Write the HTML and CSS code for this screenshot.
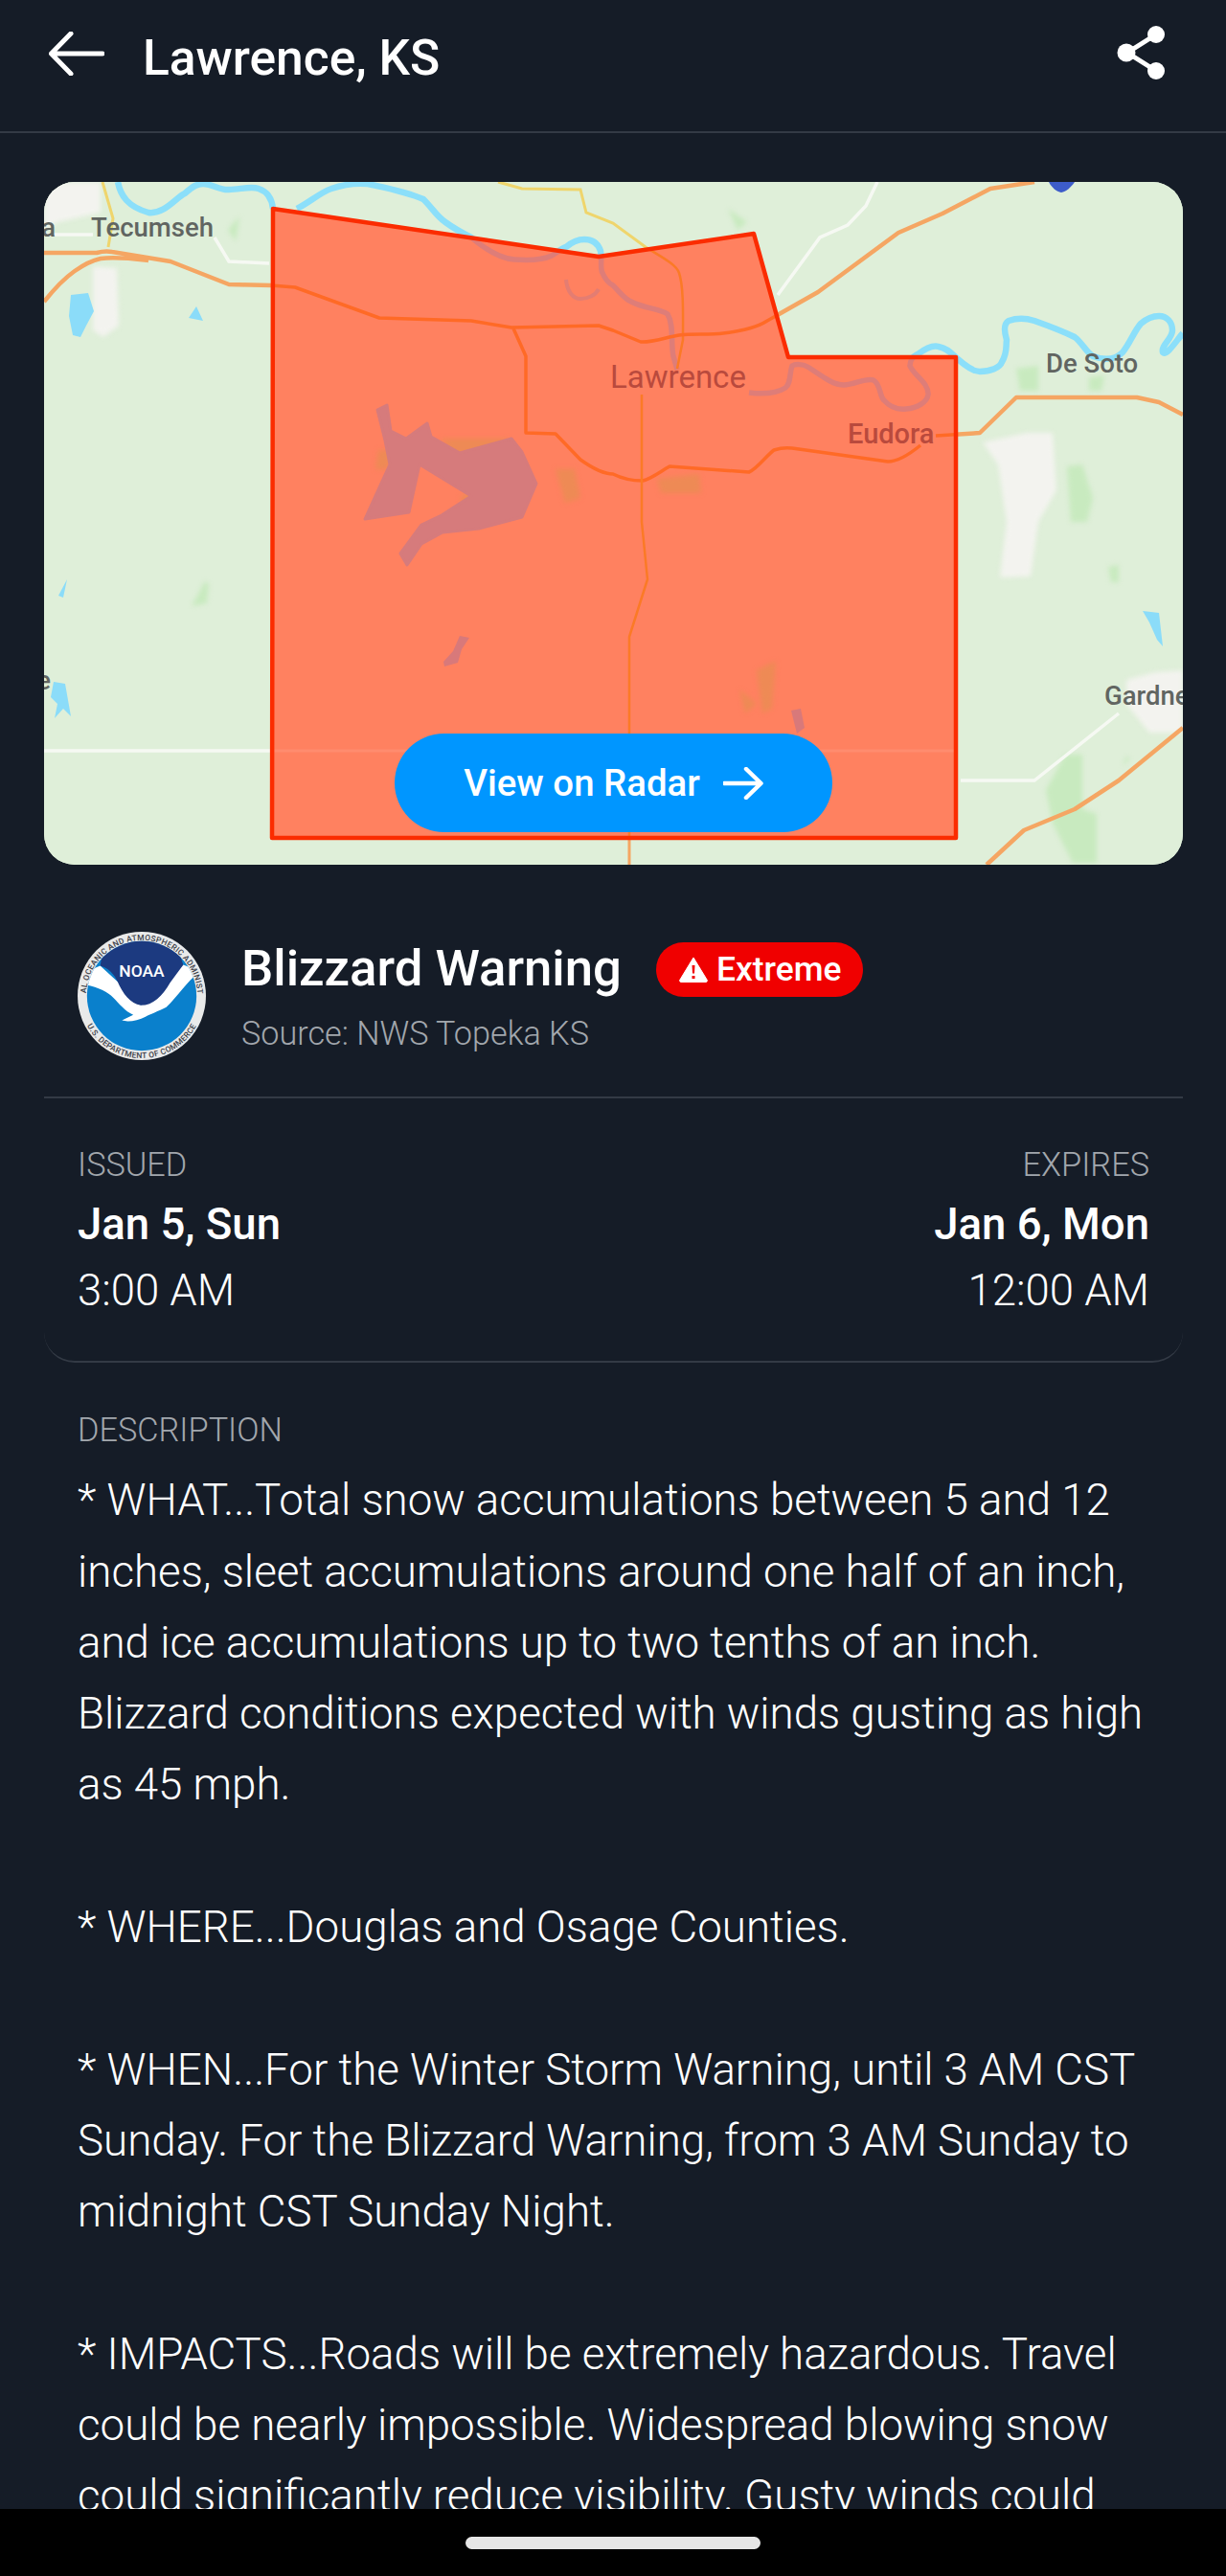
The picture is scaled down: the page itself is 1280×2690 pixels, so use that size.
FILE: index.html
```html
<!DOCTYPE html>
<html lang="en">
<head>
<meta charset="utf-8">
<title>Lawrence, KS</title>
<link rel="stylesheet" href="styles.css">
</head>
<body>
<div class="app">
  <header class="topbar">
    <div class="topbar-left">
      <svg class="back-icon" viewBox="0 0 58 46" aria-hidden="true"><path d="M56 23H3M23 2 2.5 23 23 44"/></svg>
      <h1 class="topbar-title">Lawrence, KS</h1>
    </div>
    <svg class="share-icon" viewBox="0 0 52 56" aria-hidden="true">
      <path class="share-lines" d="M41 9 11 28l30 19"/>
      <circle cx="41" cy="9" r="9"/><circle cx="10" cy="28" r="9.5"/><circle cx="41" cy="47" r="9"/>
    </svg>
  </header>

  <main class="content">
    <section class="map">
      <svg class="map-svg" viewBox="46 190 1189 713" aria-hidden="true">
        <defs>
          <clipPath id="warn-area"><polygon points="285,218 625,268 787,244 823,373 998,373 998,875 284,875"/></clipPath>
          <path id="rivers" d="M123 190C126 205 134 216 155 222C172 224 184 206 193 202C202 194 206 192 212 192C222 192 230 199 239 198C250 198 262 194 270 197C279 200 284 208 285 218M310 218C322 212 336 200 346 197C360 192 372 191 384 192C402 196 424 200 442 208C452 218 456 226 465 232C476 240 484 244 492 248C504 258 520 270 537 271C552 272 566 272 576 267C584 262 588 258 591 258C598 252 604 250 610 250C620 250 625 256 627 262C629 272 626 280 629 285C632 292 636 296 640 298C648 306 652 312 659 315C672 322 688 322 697 328C704 340 700 358 703 372L707 386M782 410C798 412 812 410 820 405C826 400 824 390 827 382C830 380 838 380 843 383C855 390 868 402 881 402C892 402 904 394 912 397C920 402 918 414 923 418C930 426 938 428 946 427C958 426 968 420 969 412C970 400 954 392 950 382C950 376 954 372 958 370C966 364 974 360 980 362C990 364 994 370 1000 375C1008 382 1016 388 1023 388C1034 388 1044 384 1046 378C1052 368 1050 362 1051 355C1048 345 1048 338 1053 335C1062 332 1070 332 1080 335C1094 340 1110 346 1122 352C1130 358 1134 368 1141 372C1152 376 1164 376 1172 368C1180 358 1184 346 1191 338C1198 332 1204 330 1210 330C1218 330 1224 336 1224 345C1224 354 1212 360 1214 368C1218 372 1228 356 1235 348"/>
          <path id="oxbow" d="M591 292C592 304 598 312 606 312C614 312 622 308 625 302"/>
          <path id="roads-main" d="M46 264H101C108 262 112 262 117 263L178 273L239 297L283 298L308 300L396 332L492 335L534 342L625 340L640 345L669 357C680 358 696 352 709 350C724 348 740 350 755 348C772 346 790 342 801 335L854 305L938 243L984 223L1034 197L1080 190M46 315C58 300 68 290 78 283C88 276 96 272 105 270C122 268 138 270 155 272"/>
          <path id="roads-east" d="M536 343L549 372V452L580 453L606 480C620 490 630 495 640 495C650 500 660 502 671 502C680 500 690 492 699 487L782 493C790 490 800 476 808 470C814 468 820 467 827 468L927 482C938 482 950 474 961 465M977 455L1023 452L1061 415H1187L1210 420L1235 433M1235 760L1168 815L1122 845L1069 867L1030 903"/>
          <path id="roads-yellow" d="M520 190L545 197L606 198L612 222L640 233L674 258C690 268 706 276 709 285C714 300 713 330 713 355L707 385M107 190L118 228L113 258"/>
          <path id="road-south" d="M670 412V545L676 605L657 665V903"/>
          <path id="roads-white" d="M48 245H97M224 248L239 273L281 275M916 190L904 215L885 235L856 248L812 308M46 784H1000M1003 815H1080L1168 745"/>
          <path id="clinton-lake" d="M394 428L404 423L408 450L424 458L446 442L450 456L480 473L534 458L545 472L560 505L545 540L500 552L462 556L440 568L425 590L418 578L440 548L461 538L492 518L438 485L427 535L381 542L407 485L402 460Z"/>
        </defs>

        <rect class="land" x="46" y="190" width="1189" height="713"/>
        <g class="soft-wide">
          <path class="urban" d="M46 190H105V222L60 232L46 240ZM97 278L122 280L124 340L108 352L97 345ZM1026 462L1072 452L1099 452L1103 512L1084 545L1076 602L1044 603L1051 545L1042 485ZM1176 710L1206 702L1235 700V765L1200 765L1176 735Z"/>
          <path class="green" d="M1061 385L1084 382L1084 408L1065 408ZM1137 394L1153 392L1150 408L1137 408ZM1114 487L1130 485L1141 520L1135 545L1118 545ZM1092 825L1112 788L1130 788L1130 845L1145 850L1145 901H1120L1099 860ZM1157 592L1168 590L1168 608L1160 608ZM1176 790L1180 792L1172 800ZM238 240L250 226L246 252ZM760 218L770 240L780 232ZM214 607L218 610L216 630L200 633Z"/>
        </g>
        <g class="soft">
          <use class="river" href="#rivers"/>
          <path class="lake" d="M74 308L92 306L98 325L90 340L84 352L76 350L72 330ZM205 320L212 335L197 332ZM70 605L66 624L61 622ZM56 712L68 714L74 748L66 740L57 750L60 735L53 728ZM1193 638L1210 640L1214 675L1208 668L1200 650Z"/>
          <use class="road-white" href="#roads-white"/>
          <use class="road-yellow" href="#roads-yellow"/>
          <use class="road" href="#roads-main"/>
          <use class="road" href="#roads-east"/>
          <use class="road-thin" href="#road-south"/>
          <path class="pin" d="M1095 190H1122C1118 196 1113 200 1108 201C1103 200 1098 196 1095 190Z"/>
        </g>

        <g clip-path="url(#warn-area)">
          <rect class="warn-fill" x="284" y="218" width="714" height="657"/>
          <g class="soft-wide">
            <path class="warn-patch" d="M686 500L730 495L732 515L690 515ZM460 458L530 458L530 478L475 478ZM395 470L410 470L405 490L392 490ZM580 490L600 490L606 520L590 525ZM480 520L500 505L490 535ZM772 720L790 735L778 745ZM790 700L810 690L806 740L796 745Z"/>
          </g>
          <g class="soft">
            <use class="warn-river" href="#rivers"/>
            <use class="warn-oxbow" href="#oxbow"/>
            <use class="warn-lake" href="#clinton-lake"/>
            <path class="warn-pond" d="M480 664L490 666L482 678L478 692L464 696L463 691L473 680ZM826 742L836 740L840 760L832 766Z"/>
            <use class="warn-road-white" href="#roads-white"/>
            <use class="warn-road-thin" href="#roads-yellow"/>
            <use class="warn-road" href="#roads-main"/>
            <use class="warn-road" href="#roads-east"/>
            <use class="warn-road-thin" href="#road-south"/>
          </g>
        </g>
        <polygon class="warn-edge" points="285,218 625,268 787,244 823,373 998,373 998,875 284,875"/>

        <text class="label" x="58" y="247" text-anchor="end">a</text>
        <text class="label" x="95" y="247">Tecumseh</text>
        <text class="label" x="53" y="720" text-anchor="end">e</text>
        <text class="label" x="1092" y="389">De Soto</text>
        <text class="label" x="1153" y="736">Gardner</text>
        <text class="label label-warn label-city" x="637" y="405">Lawrence</text>
        <text class="label label-warn" x="885" y="463">Eudora</text>
      </svg>
      <a class="radar-btn">
        <span>View on Radar</span>
        <svg class="radar-arrow" viewBox="0 0 42 34" aria-hidden="true"><path d="M1 17H39M24 2 39.5 17 24 32"/></svg>
      </a>
    </section>

    <section class="alert-head">
      <svg class="noaa" viewBox="0 0 136 136" role="img" aria-label="NOAA logo">
        <defs>
          <clipPath id="noaa-inner"><circle cx="68" cy="68" r="58"/></clipPath>
          <path id="ring-top" d="M9 68A59 59 0 0 1 127 68"/>
          <path id="ring-bottom" d="M2 68A66 66 0 0 0 134 68"/>
        </defs>
        <circle class="noaa-ring" cx="68" cy="68" r="68"/>
        <text class="noaa-ring-text"><textPath href="#ring-top" startOffset="50%" text-anchor="middle">NATIONAL OCEANIC AND ATMOSPHERIC ADMINISTRATION</textPath></text>
        <text class="noaa-ring-text"><textPath href="#ring-bottom" startOffset="50%" text-anchor="middle">U.S. DEPARTMENT OF COMMERCE</textPath></text>
        <g clip-path="url(#noaa-inner)">
          <rect class="noaa-blue" width="136" height="136"/>
          <path class="noaa-white" d="M0 46L24 36L50 60L67 78L112 35L130 42C118 50 108 66 94 80C86 84 76 88 72 90C64 94 54 96 47 94L59 88C50 84 44 76 38 70C30 62 18 57 0 55Z"/>
          <path class="noaa-navy" d="M24 36C32 38 38 44 42 52C48 66 56 76 67 78C80 78 90 68 98 54L112 35L100 0H30Z"/>
        </g>
        <text class="noaa-mark" x="68" y="48" text-anchor="middle" textLength="48" lengthAdjust="spacingAndGlyphs">NOAA</text>
      </svg>
      <div class="alert-text">
        <div class="alert-title-row">
          <h2 class="alert-title">Blizzard Warning</h2>
          <span class="badge">
            <svg class="badge-icon" viewBox="0 0 32 28" aria-hidden="true">
              <path class="badge-tri" d="M16 2 30 25a1.5 1.5 0 0 1-1 2.500H3a1.500 1.500 0 0 1-1-2.500Z"/>
              <path class="badge-mark" d="M14.500 10h3l-.5 8.500h-2ZM14.500 21h3v3h-3Z"/>
            </svg>
            <span>Extreme</span>
          </span>
        </div>
        <p class="alert-source">Source: NWS Topeka KS</p>
      </div>
    </section>

    <section class="dates">
      <div class="date-col">
        <div class="caption">ISSUED</div>
        <div class="date-day">Jan 5, Sun</div>
        <div class="date-time">3:00 AM</div>
      </div>
      <div class="date-col date-col-end">
        <div class="caption">EXPIRES</div>
        <div class="date-day">Jan 6, Mon</div>
        <div class="date-time">12:00 AM</div>
      </div>
    </section>

    <section class="description">
      <div class="caption">DESCRIPTION</div>
      <p class="description-body">* WHAT...Total snow accumulations between 5 and 12 inches, sleet accumulations around one half of an inch, and ice accumulations up to two tenths of an inch. Blizzard conditions expected with winds gusting as high as 45 mph.

* WHERE...Douglas and Osage Counties.

* WHEN...For the Winter Storm Warning, until 3 AM CST Sunday. For the Blizzard Warning, from 3 AM Sunday to midnight CST Sunday Night.

* IMPACTS...Roads will be extremely hazardous. Travel could be nearly impossible. Widespread blowing snow could significantly reduce visibility. Gusty winds could</p>
    </section>
  </main>

  <footer class="navbar"><div class="nav-pill"></div></footer>
</div>
</body>
</html>
```

FILE: styles.css
```css
* { box-sizing: border-box; }
html, body { margin: 0; padding: 0; background: #151c27; }
body { font-family: Roboto, "Liberation Sans", sans-serif; color: #fff; }
h1, h2, p { margin: 0; font: inherit; }

.app { height: 2690px; display: flex; flex-direction: column; overflow: hidden; }

/* top bar */
.topbar {
  height: 139px; flex: none; display: flex; justify-content: space-between; align-items: flex-start;
  padding: 27px 62px 0 51px; border-bottom: 2px solid #333a45;
}
.topbar-left { display: flex; align-items: flex-start; gap: 40px; }
.back-icon { width: 58px; height: 46px; margin-top: 6px; fill: none; stroke: #fff; stroke-width: 5; stroke-linecap: round; stroke-linejoin: round; }
.topbar-title { font-size: 51.500px; font-weight: 500; line-height: 56px; margin-top: 6px; }
.share-icon { width: 52px; height: 56px; fill: #fff; }
.share-lines { fill: none; stroke: #fff; stroke-width: 5; }

/* content */
.content { flex: 1; min-height: 0; overflow: hidden; padding: 51px 45px 0 46px; }

/* map */
.map { position: relative; height: 713px; border-radius: 32px; overflow: hidden; background: #dfefd9; }
.map-svg { display: block; width: 100%; height: 100%; }
.land { fill: #dfefd9; }
.soft { filter: blur(0.7px); }
.soft-wide { filter: blur(2.500px); }
.urban { fill: #f3f3ef; }
.green { fill: #c8eabf; }
.lake { fill: #8bdcf9; }
.river { fill: none; stroke: #8bdffa; stroke-width: 6.500; stroke-linejoin: round; }
.road { fill: none; stroke: #f5a663; stroke-width: 4.500; stroke-linejoin: round; }
.road-thin { fill: none; stroke: #f5a663; stroke-width: 3; }
.road-yellow { fill: none; stroke: #efd56c; stroke-width: 3; }
.road-white { fill: none; stroke: #f6f9f3; stroke-width: 3.500; }
.pin { fill: #3d5cc9; }
.warn-fill { fill: #ff8160; }
.warn-patch { fill: #ee8a55; }
.warn-lake { fill: #d67b7c; stroke: #d67b7c; stroke-width: 3; stroke-linejoin: round; }
.warn-pond { fill: #d8797a; }
.warn-river { fill: none; stroke: #de7d78; stroke-width: 5.500; stroke-linejoin: round; }
.warn-oxbow { fill: none; stroke: #e47d72; stroke-width: 4; }
.warn-road { fill: none; stroke: #ff6a26; stroke-width: 3.500; stroke-linejoin: round; }
.warn-road-thin { fill: none; stroke: #fb7a26; stroke-width: 2.500; }
.warn-road-white { fill: none; stroke: #ff8c6e; stroke-width: 3; }
.warn-edge { fill: none; stroke: #fb2c00; stroke-width: 4.500; stroke-linejoin: round; }
.label { font-family: Roboto, sans-serif; font-size: 27.500px; font-weight: 500; fill: #616561; }
.label-warn { fill: #b94a3d; font-size: 29px; }
.label-city { font-size: 33px; font-weight: 400; }

.radar-btn {
  position: absolute; left: 366px; bottom: 34px; width: 457px; height: 103px;
  border-radius: 52px; background: #0096ff; display: flex; align-items: center; justify-content: center; gap: 24px;
  font-size: 38.400px; font-weight: 500; color: #fff;
}
.radar-arrow { width: 42px; height: 34px; fill: none; stroke: #fff; stroke-width: 4.500; stroke-linecap: round; stroke-linejoin: round; }

/* alert heading */
.alert-head {
  display: flex; align-items: center; gap: 37px; margin-top: 70px; padding: 0 0 38px 35px;
  border-bottom: 2px solid #333a45;
}
.noaa { width: 134px; height: 134px; flex: none; }
.noaa-ring { fill: #e9eaea; }
.noaa-ring-text { font-size: 8.500px; font-weight: 500; fill: #3b4048; letter-spacing: .3px; }
.noaa-blue { fill: #0a80cc; }
.noaa-white { fill: #fff; }
.noaa-navy { fill: #1c3a80; }
.noaa-mark { font-size: 17px; font-weight: 500; fill: #fff; }
.alert-text { display: flex; flex-direction: column; gap: 18px; padding-top: 2px; }
.alert-title-row { display: flex; align-items: center; gap: 36px; height: 58px; }
.alert-title { font-size: 52.700px; font-weight: 500; line-height: 58px; padding-bottom: 2px; }
.badge {
  display: flex; align-items: center; gap: 8px; height: 57px; padding: 0 23px 0 23px;
  border-radius: 29px; background: #f00000; font-size: 35.400px; font-weight: 500;
}
.badge-icon { width: 32px; height: 28px; }
.badge-tri { fill: #fff; stroke: #fff; stroke-width: 1; stroke-linejoin: round; }
.badge-mark { fill: #f00000; }
.alert-source { font-size: 34.200px; font-weight: 300; line-height: 40px; color: #a2a7ad; }

/* dates */
.dates {
  display: flex; justify-content: space-between; padding: 49px 35px 47px 35px;
  border-bottom: 2px solid #333a45; border-radius: 0 0 32px 32px;
}
.date-col { display: flex; flex-direction: column; }
.date-col-end { align-items: flex-end; }
.caption { font-size: 34.300px; font-weight: 300; line-height: 40px; color: #a2a7ad; }
.date-day { font-size: 45.500px; font-weight: 500; line-height: 52px; margin-top: 16.500px; }
.date-time { font-size: 45.500px; font-weight: 300; line-height: 52px; margin-top: 17.500px; }

/* description */
.description { margin-top: 50px; padding: 0 35px; }
.description-body { margin-top: 17.300px; font-size: 45.700px; font-weight: 300; line-height: 74.300px; white-space: pre-line; }

/* system navigation */
.navbar { height: 70px; flex: none; background: #000; display: flex; align-items: center; justify-content: center; }
.nav-pill { width: 308px; height: 13px; border-radius: 7px; background: #e6e6e6; }
```
